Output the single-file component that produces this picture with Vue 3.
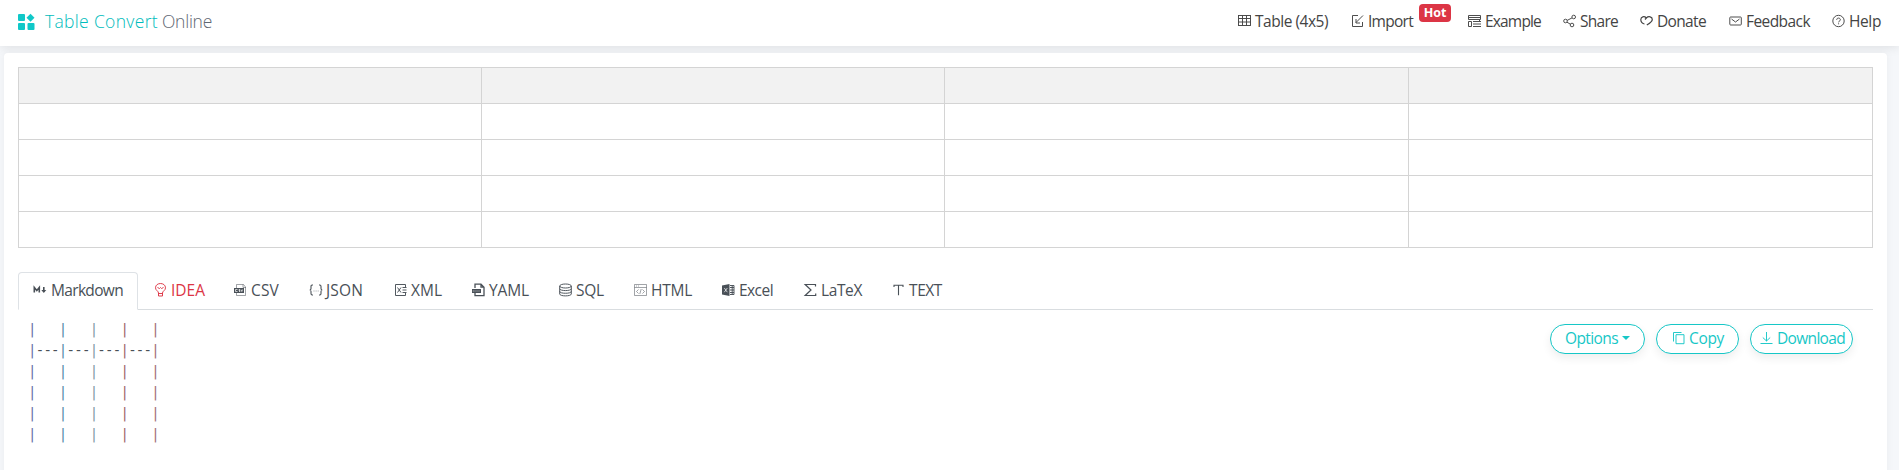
<script setup>
const nav = [
  { icon: 'table', label: 'Table (4x5)', slot: 113, text: 73 },
  { icon: 'import', label: 'Import', slot: 117, text: 45, badge: 'Hot' },
  { icon: 'example', label: 'Example', slot: 95, text: 56 },
  { icon: 'share', label: 'Share', slot: 77, text: 38 },
  { icon: 'heart', label: 'Donate', slot: 89, text: 49 },
  { icon: 'mail', label: 'Feedback', slot: 103, text: 64 },
  { icon: 'help', label: 'Help', slot: 67, text: 32 }
]
const tabs = [
  { icon: 'md', label: 'Markdown', slot: 120, text: 72 },
  { icon: 'bulb', label: 'IDEA', slot: 80, text: 34 },
  { icon: 'csv', label: 'CSV', slot: 75, text: 28 },
  { icon: 'json', label: 'JSON', slot: 85, text: 37 },
  { icon: 'xml', label: 'XML', slot: 78, text: 31 },
  { icon: 'yaml', label: 'YAML', slot: 87, text: 40 },
  { icon: 'sql', label: 'SQL', slot: 75, text: 28 },
  { icon: 'html', label: 'HTML', slot: 88, text: 41 },
  { icon: 'excel', label: 'Excel', slot: 82, text: 34 },
  { icon: 'sigma', label: 'LaTeX', slot: 88, text: 41 },
  { icon: 'text', label: 'TEXT', slot: 84, text: 33 }
]
const icons = {
  table: '<rect x=".5" y="1.500" width="12" height="10"/><path d="M.5 4.500h12M.5 8h12M4.500 1.500v10M8.500 1.500v10"/>',
  import: '<path d="M7 1.500H1.500v11h10V8M12 1.500L5 8.500M5 5v4h4"/>',
  example: '<path d="M.5 1.500h12v4H.5zM.5 3.500h12M.5 7.500h3v5h-3zM5 7.500h8M5 10h8M5 12.500h8M11.500 5.500v2"/>',
  share: '<circle cx="2.500" cy="7" r="1.800"/><circle cx="10.700" cy="3" r="1.800"/><circle cx="9" cy="11" r="1.800"/><path d="M4.200 6.400l4.800-2.500M4 8.200l3.400 2"/>',
  heart: '<path stroke-width="1.200" d="M4.500 10C2.500 10 .8 8 .8 5.800.8 2.500 4.300 1.800 6.300 4 8.500 1.800 12.300 2.500 12.300 5.500c0 2-2.500 3.800-5.500 5.500M6.300 4L5 5.500"/>',
  mail: '<rect x=".8" y="3" width="11.500" height="8" rx=".8"/><path d="M2.500 5l4 3 4-3"/>',
  help: '<circle cx="6.500" cy="7" r="5.700"/><path d="M4.700 5.800c0-2.400 3.700-2.200 3.700 0C8.400 7 6.600 7 6.600 8.300M6.600 9.300v1"/>',
  md: '<path stroke-width="1.600" d="M1.300 9.500v-5l2.500 3 2.500-3v5M10.800 4v5"/><path class="fill" d="M8.300 7h5l-2.500 3z"/>',
  bulb: '<path d="M4.500 10C4.500 8 1.500 7.500 1.500 4.800 1.500-.9 11.500-.9 11.500 4.800 11.500 7.500 8.500 8 8.500 10v3h-4zM4.500 10.500h4M3.500 4.500l2 1 1-1 1 1 2-1"/>',
  csv: '<path class="soft" d="M2.500 5V1.500h7l2 2.500v8.500h-9V10M9 1.500v3h3"/><path class="fill" d="M0 5h10v5H0z"/><path class="pale" d="M3.500 6.500h-2v2h2M6 6.500H5v1h1v1H5M7 6.500l.8 2 .8-2"/>',
  json: '<path stroke-width="1.100" d="M4 2H3.200Q2 2 2 3.500V5.500Q2 7 .7 7 2 7 2 8.500v2Q2 12 3.200 12H4M10 2h.8Q12 2 12 3.500v2Q12 7 13.300 7 12 7 12 8.500v2q0 1.500-1.200 1.500H10"/><path class="soft" d="M4.500 8h1M6.600 8h1M8.700 8h1"/>',
  xml: '<path d="M11.500 4V1.500H1.500v11h10V10M3.500 4.500l3.500 5M7 4.500l-3.500 5M8.500 4.500h4M8.500 7h4M8.500 9.500h4"/>',
  yaml: '<path stroke-width="1.300" d="M3 5V1.200h6l3 3v8.500H3V10M9 1.200v3h3"/><path class="fill" d="M0 6h9v4H0z"/><path class="pale" d="M1.300 7.500v1M3 7.500v1M5 7.500v1M7 7.500v1"/>',
  sql: '<ellipse cx="6.500" cy="3" rx="5.800" ry="2"/><path d="M.7 3v8c0 2.500 11.600 2.500 11.600 0V3M.7 5.700c0 2.500 11.600 2.500 11.600 0M.7 8.400c0 2.500 11.600 2.500 11.600 0"/>',
  html: '<path class="soft" d="M.5 1.500h12v11H.5zM.5 4.500h12M2 3h1M4 3h1M4.500 6.500l-2 2 2 2M8.500 6.500l2 2-2 2M7.200 6l-1.400 5"/>',
  excel: '<path class="fill" d="M0 2.500L7.500 1v12L0 11.500z"/><path d="M8 2.500h4v9H8M8 4.500h4M8 7h4M8 9.500h4M10.200 3v8"/><path class="pale" stroke-width="1" d="M2.300 5l3 4.200M5.300 5l-3 4.200"/>',
  sigma: '<path stroke-width="1.200" d="M11.500 3.500V1.500H1.200L7 7l-5.800 5.500h10.500v-2"/>',
  text: '<path stroke-width="1.100" d="M2 4V2.200h9V4M6.500 2.200v10"/>',
  copy: '<path d="M1.500 10.500v-9h8M4 3.700h8v9H4z"/>',
  download: '<path d="M6.500 1v9M2.800 6.500L6.500 10l3.700-3.500M.5 12.500h12"/>'
}
const lines = ['|   |   |   |   |', '|---|---|---|---|', ...Array(4).fill('|   |   |   |   |')]
const cells = (line) => line.match(/\|[^|]*/g)

// Adjusts tracking so a label occupies its allotted width.
const vFit = {
  mounted(el, { value }) {
    const natural = el.getBoundingClientRect().width
    el.style.letterSpacing = (value - natural) / el.textContent.length + 'px'
  }
}
</script>

<template>
  <div class="page">
    <header>
      <svg class="logo" viewBox="0 0 17 17"><rect width="7" height="7" rx="1"/><rect y="9" width="7" height="7" rx="1"/><rect x="9.500" y="9" width="7" height="7" rx="1"/><path d="M12.500-.3l4 4-4 4-4-4z"/></svg>
      <h1><span v-fit="113" class="brand">Table Convert</span><span v-fit="50" class="online">Online</span></h1>
      <nav>
        <a v-for="n in nav" :key="n.label" :style="{ width: n.slot + 'px' }">
          <svg class="icon" viewBox="0 0 14 14" v-html="icons[n.icon]"></svg>
          <span v-fit="n.text" class="label">{{ n.label }}</span>
          <b v-if="n.badge">{{ n.badge }}</b>
        </a>
      </nav>
    </header>
    <main>
      <table>
        <colgroup><col class="col"><col class="col"><col class="wide"><col></colgroup>
        <tbody>
          <tr v-for="r in 5" :key="r"><td v-for="c in 4" :key="c"></td></tr>
        </tbody>
      </table>
      <div class="tabs">
        <a v-for="(t, i) in tabs" :key="t.label" :class="{ active: i === 0, idea: t.icon === 'bulb' }" :style="{ width: t.slot + 'px' }">
          <svg class="icon" viewBox="0 0 14 14" v-html="icons[t.icon]"></svg>
          <span v-fit="t.text" class="label">{{ t.label }}</span>
        </a>
      </div>
      <div class="output">
        <div class="code">
          <div v-for="(l, i) in lines" :key="i"><span v-for="(c, j) in cells(l)" :key="j"><i :class="'c' + j">|</i>{{ c.slice(1) }}</span></div>
        </div>
        <div class="actions">
          <button class="options"><span v-fit="53">Options</span><em></em></button>
          <button class="copy"><svg class="icon" viewBox="0 0 14 14" v-html="icons.copy"></svg><span v-fit="35">Copy</span></button>
          <button class="download"><svg class="icon" viewBox="0 0 14 14" v-html="icons.download"></svg><span v-fit="68">Download</span></button>
        </div>
      </div>
    </main>
  </div>
</template>

<style>
body { margin: 0; overflow: hidden; }
</style>

<style scoped>
.page { height: 470px; overflow: hidden; background: #f5f7fa; font-family: "Open Sans", "Noto Sans", sans-serif; font-size: 15.5px; color: #495057; }
.page * { box-sizing: border-box; }
header { position: relative; display: flex; align-items: center; height: 46px; padding-left: 18px; background: #fff; box-shadow: 0 1px 10px rgba(0, 0, 0, .1); }
.logo { width: 17px; height: 17px; margin: -2px 10px 0 0; fill: #10c8c8; overflow: visible; }
h1 { display: flex; gap: 4px; margin: 0; padding-bottom: 5px; font-size: 17.5px; font-weight: 300; line-height: 24px; white-space: nowrap; }
.brand { color: #00bcbc; }
.online { color: #5f6873; }
nav { display: flex; margin-left: auto; padding-bottom: 5px; color: #444; }
nav a { display: flex; align-items: center; height: 24px; }
.icon { flex: none; width: 14px; height: 14px; margin-right: 3px; fill: none; stroke: currentColor; stroke-width: .95; overflow: visible; }
.icon :deep(.fill) { fill: currentColor; stroke: none; }
.icon :deep(.soft) { opacity: .55; }
.icon :deep(.pale) { stroke: #fff; stroke-width: .7; }
.label, button span { white-space: nowrap; }
b { width: 32px; height: 18px; margin: -16px 0 0 6px; border-radius: 4px; background: #dc3545; color: #fff; font-size: 12.5px; line-height: 18px; text-align: center; }
main { position: relative; width: 1883px; height: 430px; margin: 7px 0 0 4px; padding: 14px; border-radius: 4px; background: #fff; box-shadow: 0 0 8px rgba(0, 0, 0, .05); }
table { width: 1855px; border-collapse: collapse; table-layout: fixed; }
.col { width: 463px; }
.wide { width: 464px; }
td { height: 36px; padding: 0; border: 1px solid #d4d4d4; }
tr:first-child td { background: #f2f2f2; }
.tabs { display: flex; height: 38px; margin-top: 24px; border-bottom: 1px solid #d9dde0; }
.tabs a { display: flex; align-items: center; height: 38px; padding: 0 0 2px 16px; }
.tabs .active { padding: 0 0 2px 14px; border: 1px solid #dee2e6; border-bottom-color: #fff; border-radius: 4px 4px 0 0; }
.tabs .active .icon { margin-right: 4px; }
.tabs .idea { color: #dc3545; }
.output { display: flex; justify-content: space-between; padding: 9px 20px 0 10px; }
.code { font: 14px/21px "DejaVu Sans Mono", monospace; letter-spacing: -.728px; white-space: pre; }
.code i { font-style: normal; }
.c0 { color: #6870a8; }
.c1 { color: #5488a8; }
.c2 { color: #8098a4; }
.c3 { color: #a06468; }
.c4 { color: #a07078; }
.actions { display: flex; gap: 11px; padding-top: 5px; }
button { display: flex; align-items: center; height: 30px; padding: 0 0 3px 15px; border: 1px solid #17c7c7; border-radius: 15px; background: #fff; box-shadow: 0 4px 10px rgba(0, 0, 0, .07); color: #17c7c7; font: 15.5px "Open Sans", "Noto Sans", sans-serif; }
.options { width: 95px; padding-left: 14px; }
.copy { width: 83px; }
.download { width: 103px; padding-left: 9px; }
em { margin: 1px 0 0 4px; border: 4px solid transparent; border-top-color: #17c7c7; border-bottom: 0; }
</style>
